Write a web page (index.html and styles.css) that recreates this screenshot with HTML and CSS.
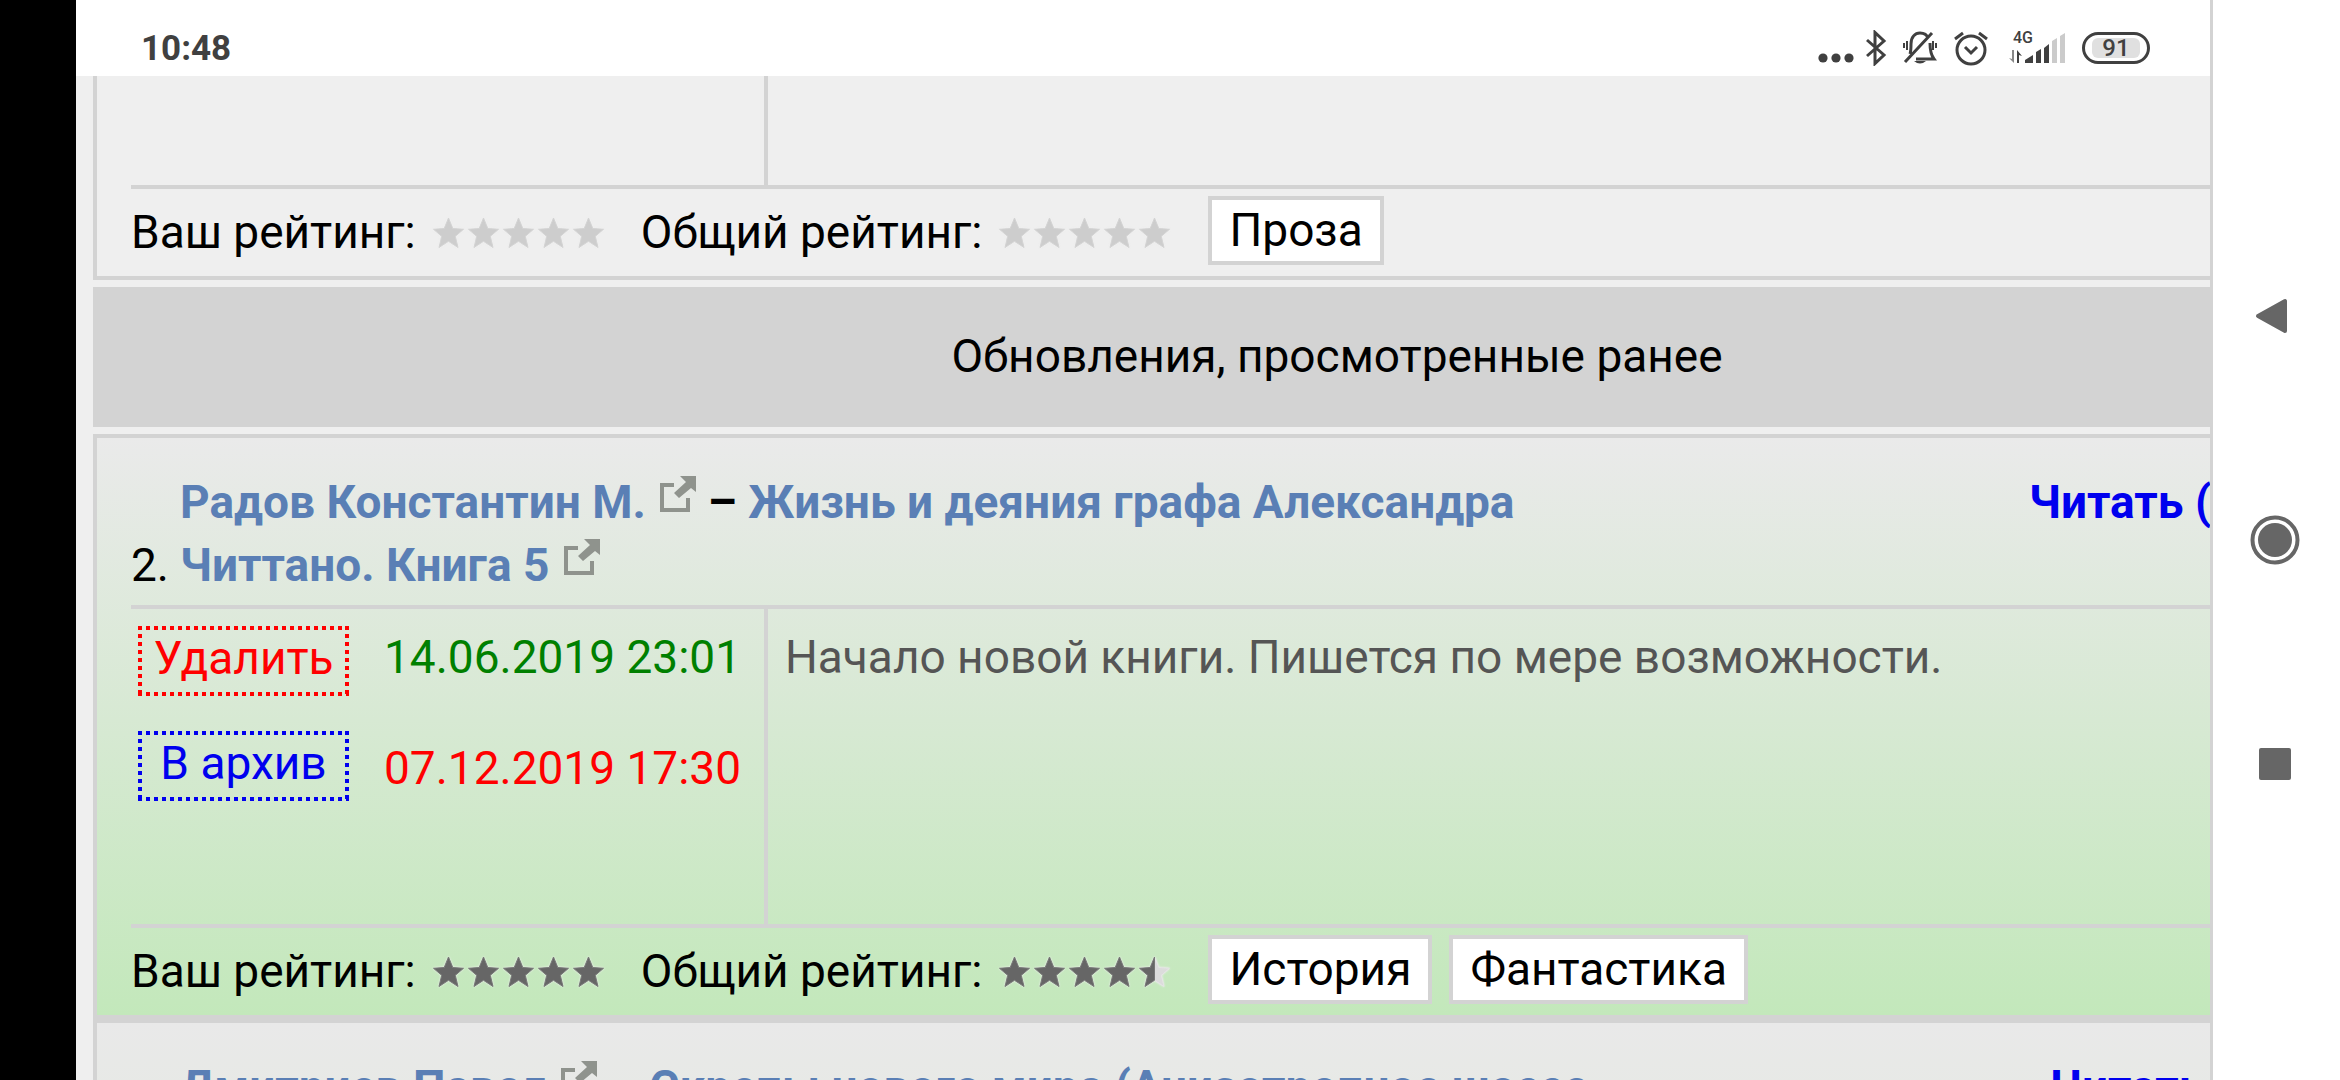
FILE: index.html
```
<!DOCTYPE html>
<html lang="ru">
<head>
  <meta charset="UTF-8">
  <meta name="viewport" content="width=device-width, initial-scale=1.0">
  <title>Обновления</title>
  <link rel="stylesheet" href="styles.css">
</head>
<body>
  <svg class="sprite" aria-hidden="true">
    <symbol id="star" viewBox="0 0 35 36">
      <path d="M17.500 3l4.300 10.500 10.700.8-8.200 7 2.700 11.200-9.500-6.200-9.500 6.200 2.700-11.200-8.200-7 10.700-.8z"/>
    </symbol>
    <symbol id="external" viewBox="0 0 36 36">
      <path d="M14 9H2v25h26V22" fill="none" stroke="#8f938d" stroke-width="4"/>
      <path d="M20 0h16v16l-5-4-12 10-5-5L26 6z" fill="#8f938d"/>
    </symbol>
  </svg>

  <div class="cutout"></div>

  <div class="screen">
    <header class="status">
      <time class="clock">10:48</time>
      <div class="status-icons">
        <svg class="i-dots" viewBox="0 0 36 36"><circle cx="5" cy="28" r="4.600"/><circle cx="18" cy="28" r="4.600"/><circle cx="31" cy="28" r="4.600"/></svg>
        <svg class="i-bt" viewBox="0 0 22 36"><path d="M2 10l17 15-9 8.500v-31l9 8.500L2 26"/></svg>
        <svg class="i-bell" viewBox="0 0 36 36">
          <path d="M8 24c1-3 1-6 1-10 0-7 4-11 9-11 4 0 7 2 8 5M28 13c0 7 1 12 4 16H14M30 3L3 32"/>
          <path class="thin" d="M5 11v9M2 13v5M31 11v9M34 13v5"/>
          <path class="solid" d="M12 31h12q-6 5-12 0z"/>
        </svg>
        <svg class="i-alarm" viewBox="0 0 36 36"><circle cx="18" cy="20" r="14"/><path d="M12 17l6 6 6-6M2 9l8-6M34 9l-8-6"/></svg>
        <div class="signal">
          <span class="net">4G</span>
          <svg viewBox="0 0 56 30">
            <path fill="#888" d="M3 17h2v13L0 25l3 1z"/><path d="M8 30V17l5 6-3-1v8z"/>
            <path d="M16 30v-3l8-5v8zM27 30V19l5-3v14zM35 30V15l5-4v19z"/>
            <path fill="#cbcbcb" d="M43 30V8l5-3v25zM51 30V3l5-3v30z"/>
          </svg>
        </div>
        <span class="battery"><span class="level">91</span></span>
      </div>
    </header>

    <main class="viewport">
      <div class="list">
        <article class="card card-first">
          <div class="info info-empty">
            <div class="side"></div>
            <div class="comment"></div>
          </div>
          <div class="rating">
            <span>Ваш рейтинг:</span>
            <svg class="stars off" viewBox="0 0 175 36"><use href="#star" width="35" height="36"/><use href="#star" x="35" width="35" height="36"/><use href="#star" x="70" width="35" height="36"/><use href="#star" x="105" width="35" height="36"/><use href="#star" x="140" width="35" height="36"/></svg>
            <span class="total">Общий рейтинг:</span>
            <svg class="stars off" viewBox="0 0 175 36"><use href="#star" width="35" height="36"/><use href="#star" x="35" width="35" height="36"/><use href="#star" x="70" width="35" height="36"/><use href="#star" x="105" width="35" height="36"/><use href="#star" x="140" width="35" height="36"/></svg>
            <div class="tags"><a class="tag" href="#">Проза</a></div>
          </div>
        </article>

        <h2 class="group">Обновления, просмотренные ранее</h2>

        <article class="card viewed">
          <div class="head">
            <span class="num">2.</span>
            <h3 class="title"><a href="#">Радов Константин М.</a> <a href="#"><svg class="ext"><use href="#external"/></svg></a> – <a href="#">Жизнь и деяния графа Александра Читтано. Книга 5</a> <a href="#"><svg class="ext"><use href="#external"/></svg></a></h3>
            <a class="read" href="#">Читать (</a>
          </div>
          <div class="info">
            <div class="side">
              <div class="actions">
                <button class="btn delete" type="button">Удалить</button>
                <button class="btn archive" type="button">В архив</button>
              </div>
              <div class="dates">
                <time class="created">14.06.2019 23:01</time>
                <time class="updated">07.12.2019 17:30</time>
              </div>
            </div>
            <div class="comment">Начало новой книги. Пишется по мере возможности.</div>
          </div>
          <div class="rating">
            <span>Ваш рейтинг:</span>
            <svg class="stars" viewBox="0 0 175 36"><use href="#star" width="35" height="36"/><use href="#star" x="35" width="35" height="36"/><use href="#star" x="70" width="35" height="36"/><use href="#star" x="105" width="35" height="36"/><use href="#star" x="140" width="35" height="36"/></svg>
            <span class="total">Общий рейтинг:</span>
            <svg class="stars" viewBox="0 0 175 36"><use href="#star" width="35" height="36"/><use href="#star" x="35" width="35" height="36"/><use href="#star" x="70" width="35" height="36"/><use href="#star" x="105" width="35" height="36"/><use class="blank" href="#star" x="140" width="35" height="36"/><path d="M157.500 3v23.300l-9.500 6.200 2.700-11.200-8.200-7 10.700-.8z"/></svg>
            <div class="tags"><a class="tag" href="#">История</a><a class="tag" href="#">Фантастика</a></div>
          </div>
        </article>

        <article class="card">
          <div class="head">
            <span class="num"></span>
            <h3 class="title"><a href="#">Дмитриев Павел</a> <a href="#"><svg class="ext"><use href="#external"/></svg></a> – <a href="#">Скрепы нового мира (Анизотропное шоссе</a></h3>
            <a class="read short" href="#">Читать</a>
          </div>
        </article>
      </div>
    </main>
  </div>

  <nav class="softkeys">
    <button type="button" aria-label="Назад"><svg viewBox="0 0 50 50"><path d="M8 25L35 10v30z" stroke="#666" stroke-width="4" stroke-linejoin="round"/></svg></button>
    <button type="button" aria-label="Домой"><svg viewBox="0 0 50 50"><circle cx="25" cy="25" r="22.500" fill="none" stroke="#666" stroke-width="4"/><circle cx="25" cy="25" r="17"/></svg></button>
    <button type="button" aria-label="Недавние"><svg viewBox="0 0 50 50"><rect x="9" y="9" width="32" height="32" rx="2"/></svg></button>
  </nav>
</body>
</html>
```

FILE: styles.css
```
* {
  box-sizing: border-box;
}
body {
  margin: 0;
  display: flex;
  height: 100vh;
  overflow: hidden;
  font-family: Roboto, sans-serif;
  font-size: 46px;
  line-height: 63px;
  color: #000;
  background: #fff;
}
h2, h3 {
  margin: 0;
  font-size: 46px;
}
a {
  text-decoration: none;
}
.sprite {
  position: absolute;
  width: 0;
  height: 0;
}
.cutout {
  flex: 0 0 76px;
  background: #000;
}
.screen {
  flex: 1;
  min-width: 0;
  display: flex;
  flex-direction: column;
}

/* status bar */
.status {
  flex: 0 0 76px;
  display: flex;
  justify-content: space-between;
  align-items: center;
  padding: 20px 60px 0 65px;
  color: #404040;
}
.clock {
  padding-top: 2px;
  font-size: 35px;
  font-weight: 700;
  line-height: 36px;
}
.status-icons {
  display: flex;
  align-items: center;
}
.status-icons svg {
  display: block;
  height: 36px;
  fill: #404040;
}
.status-icons .i-dots {
  width: 36px;
  margin-right: 11px;
}
.status-icons .i-bt,
.status-icons .i-bell,
.status-icons .i-alarm {
  fill: none;
  stroke: #404040;
  stroke-width: 3;
}
.i-bt {
  width: 22px;
  margin-right: 15px;
}
.i-bell {
  width: 36px;
  margin-right: 15px;
}
.i-bell .thin {
  stroke-width: 2;
}
.i-bell .solid {
  fill: #404040;
  stroke: none;
}
.i-alarm {
  width: 36px;
  margin-right: 20px;
}
.signal {
  position: relative;
  width: 56px;
  margin-right: 17px;
}
.status-icons .signal svg {
  width: 56px;
  height: 30px;
}
.net {
  position: absolute;
  left: 4px;
  top: -3px;
  font-size: 16px;
  font-weight: 500;
  line-height: 16px;
}
.battery {
  width: 68px;
  height: 32px;
  padding: 3px 7px;
  border: 3px solid #404040;
  border-radius: 16px;
}
.level {
  display: block;
  height: 20px;
  border-radius: 6px;
  background: #e0e0e0;
  font-size: 24px;
  font-weight: 500;
  line-height: 20px;
  text-align: center;
}

/* updates list, wider than the screen */
.viewport {
  flex: 1;
  min-height: 0;
  overflow: hidden;
  padding-left: 17px;
  background: #efefef;
}
.list {
  width: calc(100% + 371px);
}
.card {
  padding: 0 34px;
  border: 4px solid #d3d3d3;
  background: linear-gradient(#e9e9e9, #e6e9e4);
}
.card-first {
  border-top: 0;
  background: #efefef;
}
.viewed {
  background: linear-gradient(#eaeaea, #c3e8bb);
}
.group {
  margin: 7px 0;
  padding: 38px 0 39px;
  background: #d3d3d3;
  font-weight: 400;
  text-align: center;
}
.head {
  display: flex;
  align-items: flex-end;
  padding: 33px 0 8px;
}
.num {
  flex: 0 0 49px;
}
.title {
  flex: 0 0 1460px;
}
.title a {
  color: #5a7fb5;
}
.ext {
  width: 36px;
  height: 36px;
  margin-left: 3px;
  vertical-align: 6px;
}
.read {
  align-self: flex-start;
  margin-left: 389px;
  font-weight: 700;
  color: #00e;
  white-space: nowrap;
}
.read.short {
  margin-left: 410px;
}
.info {
  display: flex;
  height: 323px;
  border-top: 4px solid #d3d3d3;
  border-bottom: 4px solid #d3d3d3;
}
.info-empty {
  height: 113px;
  border-top: 0;
}
.side {
  flex: 0 0 637px;
  display: flex;
  padding: 17px 7px;
  border-right: 4px solid #d3d3d3;
}
.actions {
  width: 211px;
  margin-right: 35px;
  display: flex;
  flex-direction: column;
  gap: 35px;
}
/* square dots, the dotted border draws round ones */
.btn {
  height: 70px;
  padding: 0 0 5px;
  border: 0;
  background:
    repeating-linear-gradient(90deg, currentColor 0 4px, transparent 4px 8px) top / 100% 4px no-repeat,
    repeating-linear-gradient(90deg, currentColor 0 4px, transparent 4px 8px) bottom / 100% 4px no-repeat,
    repeating-linear-gradient(currentColor 0 4px, transparent 4px 8px) left / 4px 100% no-repeat,
    repeating-linear-gradient(currentColor 0 4px, transparent 4px 8px) right / 4px 100% no-repeat;
  font: inherit;
}
.delete {
  color: #f00;
}
.archive {
  color: #00e;
}
.dates {
  display: flex;
  flex-direction: column;
  gap: 48px;
}
.created {
  color: green;
}
.updated {
  color: #f00;
}
.comment {
  padding: 17px;
  color: #555;
}
.rating {
  display: flex;
  align-items: flex-end;
  padding: 7px 0 11px;
  line-height: 65px;
}
.stars {
  width: 175px;
  height: 36px;
  margin: 0 0 14px 15px;
  fill: #666;
  stroke: #777;
  filter: drop-shadow(0 0 1px #eee);
}
.stars.off {
  fill: #cdcdcd;
  stroke: #d3d3d3;
}
.stars .blank {
  fill: #dcdcdc;
  stroke: #e4e4e4;
}
.total {
  margin-left: 35px;
}
.tags {
  display: flex;
  gap: 17px;
  margin-left: 36px;
}
.tag {
  height: 69px;
  padding: 0 17px;
  border: 4px solid #d3d3d3;
  background: #fff;
  color: #000;
  line-height: 60px;
}

/* system buttons */
.softkeys {
  flex: 0 0 130px;
  display: flex;
  flex-direction: column;
  justify-content: center;
  align-items: center;
  gap: 174px;
  padding-right: 4px;
  border-left: 3px solid #d3d3d3;
}
.softkeys button {
  width: 50px;
  height: 50px;
  padding: 0;
  border: 0;
  background: none;
}
.softkeys svg {
  display: block;
  width: 50px;
  height: 50px;
  fill: #666;
}
```
